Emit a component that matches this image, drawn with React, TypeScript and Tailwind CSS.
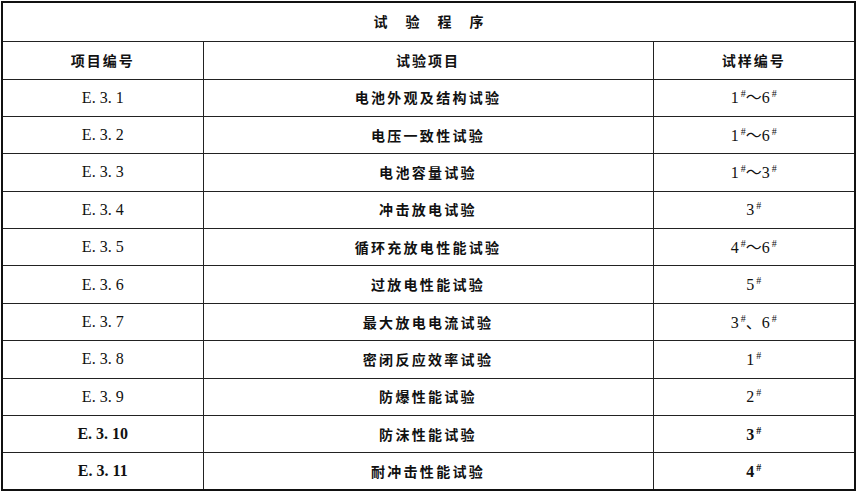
import React from "react";

const rows: { id: string; name: string; samples: string; bold?: boolean }[] = [
  { id: "E. 3. 1", name: "电池外观及结构试验", samples: "1#～6#" },
  { id: "E. 3. 2", name: "电压一致性试验", samples: "1#～6#" },
  { id: "E. 3. 3", name: "电池容量试验", samples: "1#～3#" },
  { id: "E. 3. 4", name: "冲击放电试验", samples: "3#" },
  { id: "E. 3. 5", name: "循环充放电性能试验", samples: "4#～6#" },
  { id: "E. 3. 6", name: "过放电性能试验", samples: "5#" },
  { id: "E. 3. 7", name: "最大放电电流试验", samples: "3#、6#" },
  { id: "E. 3. 8", name: "密闭反应效率试验", samples: "1#" },
  { id: "E. 3. 9", name: "防爆性能试验", samples: "2#" },
  { id: "E. 3. 10", name: "防沫性能试验", samples: "3#", bold: true },
  { id: "E. 3. 11", name: "耐冲击性能试验", samples: "4#", bold: true },
];

const cjk = "font-['Noto_Sans_CJK_SC',sans-serif]";
const serif = "font-['Liberation_Serif','Noto_Sans_CJK_SC',serif]";

// render "1#～6#" with the # as a small raised mark
const Samples = ({ text }: { text: string }) => {
  const parts = text.split("#");
  return (
    <span className={serif + " text-[16px]"}>
      {parts.map((p, i) => (
        <React.Fragment key={i}>
          {p === "～" ? (
            <span className={cjk + " inline-block ml-[6px] text-[15px]"}>～</span>
          ) : p === "、" ? (
            <span className={cjk + " inline-block ml-[3px] text-[13px]"}>、</span>
          ) : (
            p
          )}
          {i < parts.length - 1 && (
            <span className="relative top-[-6px] ml-[2px] text-[10px]">#</span>
          )}
        </React.Fragment>
      ))}
    </span>
  );
};

export default function App() {
  return (
    <div className="w-[857px] h-[492px] bg-white pt-[1px] pl-[1px] text-[#111]">
      <table className="w-[855px] border-collapse border-2 border-[#111]">
        <tbody>
          <tr className="h-[39px]">
            <td colSpan={3} className="border border-[#222] text-center">
              <div className={cjk + " flex justify-center gap-[18px] text-[14px] font-bold"}>
                <span>试</span>
                <span>验</span>
                <span>程</span>
                <span>序</span>
              </div>
            </td>
          </tr>
          <tr className={cjk + " h-[38px] text-[14px] font-bold tracking-[2px]"}>
            <td className="w-[201px] border border-[#222] text-center">项目编号</td>
            <td className="w-[450px] border border-[#222] text-center">试验项目</td>
            <td className="border border-[#222] text-center">试样编号</td>
          </tr>
          {rows.map((r) => (
            <tr key={r.id} className="h-[37.4px]">
              <td
                className={
                  serif +
                  " border border-[#222] text-center text-[16px] " +
                  (r.bold ? "font-bold" : "font-normal")
                }
              >
                {r.id}
              </td>
              <td className={cjk + " border border-[#222] text-center text-[14px] font-bold tracking-[2.3px]"}>
                {r.name}
              </td>
              <td className={"border border-[#222] text-center " + (r.bold ? "font-bold" : "font-normal")}>
                <Samples text={r.samples} />
              </td>
            </tr>
          ))}
        </tbody>
      </table>
    </div>
  );
}
